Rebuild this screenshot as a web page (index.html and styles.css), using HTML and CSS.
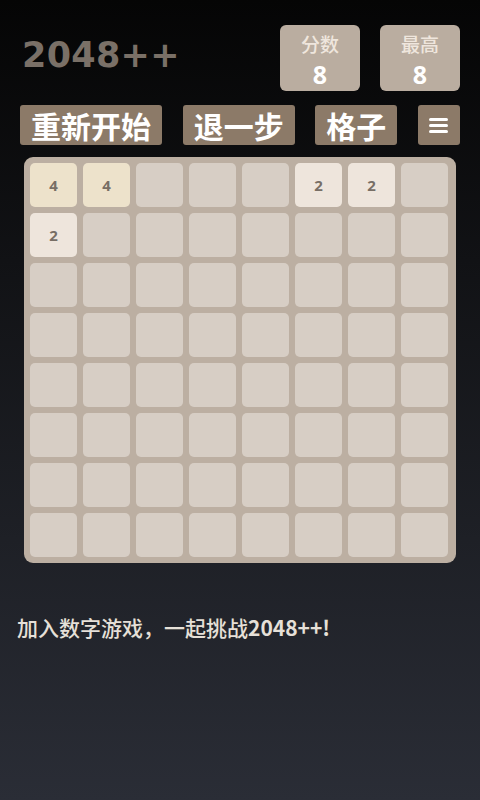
FILE: index.html
```html
<!DOCTYPE html>
<html lang="zh-CN">
<head>
<meta charset="utf-8">
<title>2048++</title>
<link rel="stylesheet" href="styles.css">
</head>
<body>
<div class="page">
  <header class="header">
    <h1 class="title">2048++</h1>
    <div class="scores">
      <div class="score-box"><div class="score-label">分数</div><div class="score-value">8</div></div>
      <div class="score-box"><div class="score-label">最高</div><div class="score-value">8</div></div>
    </div>
  </header>
  <nav class="actions">
    <button class="btn">重新开始</button>
    <button class="btn">退一步</button>
    <button class="btn">格子</button>
    <button class="btn btn-menu" aria-label="菜单">
      <svg width="19" height="15" viewBox="0 0 19 15"><rect x="0" y="0" width="19" height="3" rx="1.5" fill="#fff"/><rect x="0" y="6" width="19" height="3" rx="1.5" fill="#fff"/><rect x="0" y="12" width="19" height="3" rx="1.5" fill="#fff"/></svg>
    </button>
  </nav>
  <div class="board">
    <div class="tile t4">4</div><div class="tile t4">4</div><div class="tile"></div><div class="tile"></div><div class="tile"></div><div class="tile t2">2</div><div class="tile t2">2</div><div class="tile"></div>
    <div class="tile t2">2</div><div class="tile"></div><div class="tile"></div><div class="tile"></div><div class="tile"></div><div class="tile"></div><div class="tile"></div><div class="tile"></div>
    <div class="tile"></div><div class="tile"></div><div class="tile"></div><div class="tile"></div><div class="tile"></div><div class="tile"></div><div class="tile"></div><div class="tile"></div>
    <div class="tile"></div><div class="tile"></div><div class="tile"></div><div class="tile"></div><div class="tile"></div><div class="tile"></div><div class="tile"></div><div class="tile"></div>
    <div class="tile"></div><div class="tile"></div><div class="tile"></div><div class="tile"></div><div class="tile"></div><div class="tile"></div><div class="tile"></div><div class="tile"></div>
    <div class="tile"></div><div class="tile"></div><div class="tile"></div><div class="tile"></div><div class="tile"></div><div class="tile"></div><div class="tile"></div><div class="tile"></div>
    <div class="tile"></div><div class="tile"></div><div class="tile"></div><div class="tile"></div><div class="tile"></div><div class="tile"></div><div class="tile"></div><div class="tile"></div>
    <div class="tile"></div><div class="tile"></div><div class="tile"></div><div class="tile"></div><div class="tile"></div><div class="tile"></div><div class="tile"></div><div class="tile"></div>
  </div>
  <p class="footer">加入数字游戏，一起挑战<b>2048++!</b></p>
</div>
</body>
</html>
```

FILE: styles.css
```css
html, body {
  margin: 0;
  padding: 0;
}
body {
  width: 480px;
  min-height: 800px;
  background: linear-gradient(to bottom, #050505 0%, #2a2d36 100%);
  font-family: "Noto Sans CJK SC", "Noto Sans", sans-serif;
}
.page {
  padding: 25px 20px 0 20px;
}
.header {
  display: flex;
  justify-content: space-between;
  height: 66px;
}
.title {
  margin: 13px 0 0 2px;
  font-family: "DejaVu Sans", sans-serif;
  font-weight: 700;
  font-size: 35px;
  line-height: 35px;
  letter-spacing: 0.3px;
  color: #7a7067;
}
.scores {
  display: flex;
  gap: 20px;
}
.score-box {
  width: 80px;
  height: 66px;
  background: #baada0;
  border-radius: 6px;
  display: flex;
  flex-direction: column;
  align-items: center;
}
.score-label {
  margin-top: 8px;
  font-size: 19px;
  font-weight: 500;
  line-height: 22px;
  color: #efe6dd;
}
.score-value {
  margin-top: 4px;
  font-family: "Open Sans", sans-serif;
  font-weight: 700;
  font-size: 25px;
  line-height: 30px;
  color: #ffffff;
}
.actions {
  display: flex;
  justify-content: space-between;
  margin-top: 14px;
}
.btn {
  height: 40px;
  padding: 0 11px;
  border: none;
  border-radius: 3px;
  background: #8c7a68;
  color: #ffffff;
  font-family: "Noto Sans CJK SC", sans-serif;
  font-weight: 700;
  font-size: 30px;
  line-height: 40px;
  display: flex;
  align-items: center;
  justify-content: center;
}
.btn-menu {
  width: 42px;
  padding: 0;
}
.board {
  margin: 12px 0 0 4px;
  width: 432px;
  box-sizing: border-box;
  padding: 6px 8px 6px 6px;
  background: #bcafa2;
  border-radius: 9px;
  display: grid;
  grid-template-columns: repeat(8, 47px);
  grid-auto-rows: 44px;
  gap: 6px;
}
.tile {
  border-radius: 5px;
  background: #d7cec5;
  display: flex;
  align-items: center;
  justify-content: center;
  font-family: "Open Sans", sans-serif;
  font-weight: 700;
  font-size: 15px;
  color: #776e65;
}
.tile.t2 {
  background: #eee5dc;
}
.tile.t4 {
  background: #ede2cb;
}
.footer {
  margin: 49px 0 0 -3px;
  font-size: 21px;
  font-weight: 500;
  line-height: 30px;
  color: #e6e0d8;
}
.footer b {
  font-weight: 700;
}
```
